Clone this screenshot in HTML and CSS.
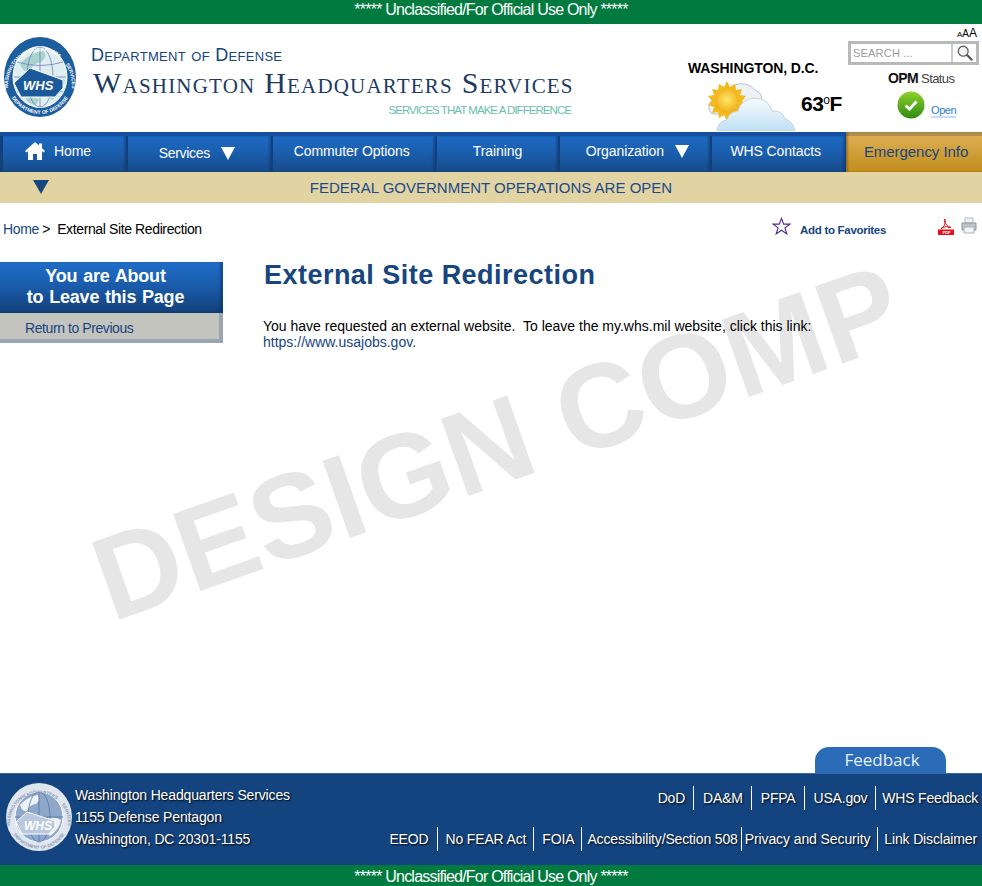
FILE: index.html
```html
<!DOCTYPE html>
<html lang="en">
<head>
  <meta charset="UTF-8" />
  <meta name="viewport" content="width=device-width, initial-scale=1.0" />
  <title>External Site Redirection</title>
  <link rel="stylesheet" href="styles.css">
</head>
<body>
  <div class="classified">***** Unclassified/For Official Use Only *****</div>

  <header class="site-header">
    <svg class="seal" viewBox="0 0 74 82" aria-hidden="true">
      <defs>
        <path id="sealTop" d="M5.500 56A32 35 0 1 1 68.500 56"/>
        <path id="sealBottom" d="M9 62A34 37 0 0 0 65 62"/>
      </defs>
      <ellipse cx="37" cy="41" rx="36" ry="40" fill="#1d5e9e"/>
      <ellipse cx="37" cy="41" rx="27" ry="30.500" fill="#dfeef0" stroke="#fff"/>
      <path d="M17 28q10-12 24-13q4 6-3 11q-8 1-11 9q-7 2-10-7zM45 43q10-3 17 1q-2 13-13 20q-8-8-4-21zM22 62q8-2 14 1q-1 5-5 6q-6-2-9-7z" fill="#a9d3cf"/>
      <g fill="none" stroke="#6f7fc0" stroke-width=".8">
        <ellipse cx="37" cy="41" rx="13" ry="30"/>
        <path d="M37 11v60M11 41h52M14 26q23 7 46 0M14 56q23-7 46 0"/>
      </g>
      <path d="M11 47L27 32l33 12v8l-8 9H18z" fill="#1b5a9a" stroke="#fff"/>
      <text class="seal-whs" x="20" y="54">WHS</text>
      <text class="seal-ring"><textPath href="#sealTop" startOffset="3%">WASHINGTON</textPath></text>
      <text class="seal-ring"><textPath href="#sealTop" startOffset="50%" text-anchor="middle">HEADQUARTERS</textPath></text>
      <text class="seal-ring"><textPath href="#sealTop" startOffset="97%" text-anchor="end">SERVICES</textPath></text>
      <text class="seal-ring"><textPath href="#sealBottom" startOffset="50%" text-anchor="middle">DEPARTMENT OF DEFENSE</textPath></text>
    </svg>

    <div class="brand">
      <div class="brand-dept">Department of Defense</div>
      <div class="brand-name">Washington Headquarters Services</div>
      <div class="brand-tag">SERVICES THAT MAKE A DIFFERENCE</div>
    </div>

    <div class="weather">
      <div class="weather-city">WASHINGTON, D.C.</div>
      <div class="weather-now">
        <svg class="weather-icon" viewBox="0 0 90 50" aria-hidden="true">
          <defs>
            <radialGradient id="sunFill" cx=".5" cy=".45" r=".55">
              <stop offset="0" stop-color="#ffe66b"/>
              <stop offset="1" stop-color="#f0ae12"/>
            </radialGradient>
            <linearGradient id="cloudFill" x1="0" y1="0" x2="0" y2="1">
              <stop offset="0" stop-color="#f8fcfe"/>
              <stop offset="1" stop-color="#bfe0f5"/>
            </linearGradient>
          </defs>
          <path d="M28 4q13-4 21 5q9 3 6 14q-6 10-20 10H6q-6-6-1-13z" fill="#eef2f6" stroke="#b8c0c8"/>
          <path d="M21 0l3 6 5-3 1 6 6-1-2 6 6 1-4 5 4 4-6 2 2 6-6-1-1 6-5-3-3 6-3-6-5 3-1-6-6 1 2-6-6-2 4-4-4-5 6-1-2-6 6 1 1-6 5 3z" fill="#f3b91f"/>
          <circle cx="21" cy="20" r="12" fill="url(#sunFill)"/>
          <path d="M11 50q1-10 10-11q2-8 11-9q3-12 17-13q14 1 17 13q10-1 13 8q8 2 10 12z" fill="url(#cloudFill)" stroke="#c4d2dc"/>
        </svg>
        <div class="weather-temp">63<sup>o</sup>F</div>
      </div>
    </div>

    <div class="header-right">
      <div class="text-size"><span class="size-s">A</span><span class="size-m">A</span><span class="size-l">A</span></div>
      <div class="search">
        <input class="search-input" type="text" placeholder="SEARCH ..." />
        <div class="search-btn">
          <svg viewBox="0 0 20 20" width="18" height="18" aria-hidden="true">
            <circle cx="8" cy="8" r="5.500" fill="#f4f4f4" stroke="#666" stroke-width="1.500"/>
            <path d="M12 12l6 6" stroke="#555" stroke-width="2.500"/>
          </svg>
        </div>
      </div>
      <div class="opm-title"><b>OPM</b> Status</div>
      <div class="opm-state">
        <svg viewBox="0 0 28 28" width="28" height="28" aria-hidden="true">
          <defs>
            <linearGradient id="okFill" x1="0" y1="0" x2="0" y2="1">
              <stop offset="0" stop-color="#8ed12a"/>
              <stop offset="1" stop-color="#2f8a12"/>
            </linearGradient>
          </defs>
          <circle cx="14" cy="14" r="13.500" fill="url(#okFill)"/>
          <path d="M8.500 14.500l4 3.500 7-7.500" fill="none" stroke="#fff" stroke-width="2.800"/>
        </svg>
        <a class="opm-link" href="#">Open</a>
      </div>
    </div>
  </header>

  <nav class="main-nav">
    <a class="nav-item nav-home" href="#">
      <svg viewBox="0 0 20 18" width="20" height="18" aria-hidden="true">
        <path d="M10 0L0 9l1.500 1.500L3 9.300V18h5v-6h4v6h5V9.300l1.500 1.200L20 9l-3-2.700V1.500h-3v2z" fill="#fff"/>
      </svg>
      <span>Home</span>
    </a>
    <a class="nav-item nav-services" href="#">Services<span class="nav-arrow"></span></a>
    <a class="nav-item nav-commuter" href="#">Commuter Options</a>
    <a class="nav-item nav-training" href="#">Training</a>
    <a class="nav-item nav-org" href="#">Organization<span class="nav-arrow"></span></a>
    <a class="nav-item nav-contacts" href="#">WHS Contacts</a>
    <a class="nav-item nav-emergency" href="#">Emergency Info</a>
  </nav>

  <div class="alert">
    <div class="alert-toggle"><span class="alert-arrow"></span></div>
    <div class="alert-text">FEDERAL GOVERNMENT OPERATIONS ARE OPEN</div>
  </div>

  <main class="page">
    <div class="watermark">DESIGN COMP</div>

    <div class="crumb-row">
      <div class="crumbs"><a href="#">Home</a> &gt;&nbsp; External Site Redirection</div>
      <a class="favorites" href="#">
        <svg viewBox="0 0 20 19" width="19" height="18" aria-hidden="true">
          <path d="M10 1.500l2.300 6h6.500l-5.200 4 2 6.300L10 14l-5.600 3.800 2-6.300-5.200-4h6.500z" fill="#fff" stroke="#4b2a96" stroke-width="1.200"/>
        </svg>
        <span>Add to Favorites</span>
      </a>
      <svg class="tool-pdf" viewBox="0 0 16 18" width="16" height="18" aria-hidden="true">
        <path d="M0 0h16v18H0z" fill="#fff" stroke="#ddd" stroke-width=".6"/>
        <path d="M3 11.500q2.500-.5 4-4.500q.8-2.500 0-5q-1.500 1 0 4q1.500 3 6 4.500q-1.500 1-4.500-1q-3 .5-5.500 2z" fill="none" stroke="#d8141c" stroke-width="1"/>
        <path d="M0 12.500h16V18H0z" fill="#e0121a"/>
        <text class="pdf-label" x="4.500" y="17">PDF</text>
      </svg>
      <svg class="tool-print" viewBox="0 0 16 17" width="16" height="17" aria-hidden="true">
        <path d="M4 1h8v5H4z" fill="#eef1f4" stroke="#b4bbc3"/>
        <path d="M1 6h14v7H1z" fill="#bcc2c9" stroke="#8f98a0"/>
        <path d="M3 10h10v6H3z" fill="#f4f5f6" stroke="#a9b0b8"/>
      </svg>
    </div>

    <div class="content">
      <aside class="side">
        <div class="side-head">You are About<br>to Leave this Page</div>
        <a class="side-link" href="#">Return to Previous</a>
      </aside>
      <article class="article">
        <h1>External Site Redirection</h1>
        <p>You have requested an external website.&nbsp; To leave the my.whs.mil website, click this link:<br><a href="#">https://www.usajobs.gov.</a></p>
      </article>
    </div>

    <div class="feedback-row">
      <a class="feedback" href="#">Feedback</a>
    </div>
  </main>

  <footer class="site-footer">
    <svg class="footer-seal" viewBox="0 0 66 68" aria-hidden="true">
      <defs>
        <path id="footTop" d="M4.500 46A29 30 0 1 1 61.500 46"/>
        <path id="footBottom" d="M8 52A30 31 0 0 0 58 52"/>
      </defs>
      <ellipse cx="33" cy="34" rx="33" ry="34" fill="#dfe6ef"/>
      <ellipse cx="33" cy="34" rx="24" ry="25" fill="#8fa8c9" stroke="#fff"/>
      <path d="M14 22q8-9 18-10q3 5-2 9q-7 1-9 7q-5 1-7-6zM40 36q9-3 15 1q-2 10-11 16q-7-6-4-17z" fill="#eef2f7"/>
      <g fill="none" stroke="#4f76a8" stroke-width=".8">
        <ellipse cx="33" cy="34" rx="11" ry="25"/>
        <path d="M33 9v50M9 34h48"/>
      </g>
      <path d="M10 39l11-10 28 9v6l-6 7H16z" fill="#b9c8dc" stroke="#fff"/>
      <text class="seal-whs seal-whs-foot" x="18" y="47">WHS</text>
      <text class="seal-ring seal-ring-foot"><textPath href="#footTop" startOffset="3%">WASHINGTON</textPath></text>
      <text class="seal-ring seal-ring-foot"><textPath href="#footTop" startOffset="50%" text-anchor="middle">HEADQUARTERS</textPath></text>
      <text class="seal-ring seal-ring-foot"><textPath href="#footTop" startOffset="97%" text-anchor="end">SERVICES</textPath></text>
      <text class="seal-ring seal-ring-foot"><textPath href="#footBottom" startOffset="50%" text-anchor="middle">DEPARTMENT OF DEFENSE</textPath></text>
    </svg>
    <address class="footer-addr">
      Washington Headquarters Services<br>
      1155 Defense Pentagon<br>
      Washington, DC 20301-1155
    </address>
    <div class="footer-links">
      <ul class="link-row row-a">
        <li><a href="#">DoD</a></li>
        <li><a href="#">DA&amp;M</a></li>
        <li><a href="#">PFPA</a></li>
        <li><a href="#">USA.gov</a></li>
        <li><a href="#">WHS Feedback</a></li>
      </ul>
      <ul class="link-row row-b">
        <li class="link-eeod"><a href="#">EEOD</a></li>
        <li><a href="#">No FEAR Act</a></li>
        <li class="link-foia"><a href="#">FOIA</a></li>
        <li class="link-access"><a href="#">Accessibility/Section 508</a></li>
        <li class="link-privacy"><a href="#">Privacy and Security</a></li>
        <li><a href="#">Link Disclaimer</a></li>
      </ul>
    </div>
  </footer>

  <div class="classified classified-bottom">***** Unclassified/For Official Use Only *****</div>
</body>
</html>
```

FILE: styles.css
```css
* {
  box-sizing: border-box;
}
body {
  margin: 0;
  height: 886px;
  display: flex;
  flex-direction: column;
  background: #fff;
  font-family: "Liberation Sans", Arial, sans-serif;
  font-size: 14px;
  color: #000;
  overflow: hidden;
}
a {
  text-decoration: none;
  color: #16457f;
}

/* classification bars */
.classified {
  height: 24px;
  flex: none;
  background: #007a3e;
  color: #fff;
  font-size: 16px;
  line-height: 20px;
  letter-spacing: -0.78px;
  text-align: center;
}
.classified-bottom {
  height: 21px;
  line-height: 24px;
  overflow: hidden;
}

/* header */
.site-header {
  height: 108px;
  flex: none;
  display: flex;
}
.seal {
  width: 74px;
  height: 82px;
  margin: 12px 0 0 3px;
  flex: none;
}
.seal-whs {
  font: italic bold 13px "Liberation Sans", sans-serif;
  fill: #fff;
}
.seal-whs-foot {
  font-size: 12px;
  fill: #fff;
}
.seal-ring {
  font: bold 5px "Liberation Sans", sans-serif;
  fill: #fff;
}
.seal-ring-foot {
  font-size: 4.500px;
  fill: #8a9cb5;
}
.brand {
  width: 480px;
  margin-left: 14px;
  padding-top: 20px;
  flex: none;
  color: #16457f;
}
.brand-dept {
  font-size: 18px;
  line-height: 22px;
  font-variant: small-caps;
  letter-spacing: 0.3px;
}
.brand-name {
  margin: 0 0 0 2px;
  font-family: "Liberation Serif", serif;
  font-size: 30px;
  line-height: 34px;
  font-variant: small-caps;
  letter-spacing: 1.2px;
  color: #1d3a66;
  white-space: nowrap;
}
.brand-tag {
  margin-top: 3px;
  font-size: 11.500px;
  line-height: 14px;
  letter-spacing: -0.95px;
  text-align: right;
  color: #6cc0ae;
}
.weather {
  width: 160px;
  margin-left: 117px;
  padding-top: 36px;
  flex: none;
}
.weather-city {
  font-size: 14px;
  font-weight: bold;
  line-height: 16px;
  letter-spacing: -0.1px;
}
.weather-now {
  display: flex;
  margin-top: 5px;
}
.weather-icon {
  width: 90px;
  height: 50px;
  margin-left: 18px;
  flex: none;
}
.weather-temp {
  margin: 11px 0 0 5px;
  font-size: 21px;
  font-weight: bold;
  line-height: 24px;
  letter-spacing: -0.5px;
}
.weather-temp sup {
  font-size: 12px;
  font-weight: normal;
  line-height: 0;
  vertical-align: 7px;
}
.header-right {
  width: 134px;
  flex: none;
}
.text-size {
  height: 17px;
  padding: 1px 5px 0 0;
  text-align: right;
  line-height: 15px;
}
.size-s {
  font-size: 8px;
}
.size-m {
  font-size: 10px;
}
.size-l {
  font-size: 12px;
}
.search {
  width: 131px;
  height: 24px;
  display: flex;
  border: 3px solid #b9b9b9;
  background: #fff;
}
.search-input {
  flex: 1;
  min-width: 0;
  border: 0;
  border-right: 2px solid #ccc;
  padding: 0 2px;
  font: 11px "Liberation Sans", sans-serif;
  letter-spacing: 0.2px;
  outline: none;
}
.search-input::placeholder {
  color: #9a9a9a;
  opacity: 1;
}
.search-btn {
  width: 23px;
  padding: 0 0 0 3px;
}
.opm-title {
  margin-top: 4px;
  padding-left: 40px;
  font-size: 13px;
  line-height: 18px;
  letter-spacing: -0.6px;
  color: #444;
  white-space: nowrap;
}
.opm-title b {
  font-size: 14px;
  color: #111;
}
.opm-state {
  display: flex;
  margin: 3px 0 0 49px;
}
.opm-link {
  margin: 13px 0 0 6px;
  height: 14px;
  font-size: 11px;
  line-height: 13px;
  letter-spacing: -0.4px;
  color: #2b7de0;
  border-bottom: 2px solid #c3dcf6;
}

/* main nav */
.main-nav {
  height: 40px;
  flex: none;
  display: flex;
  padding: 4px 0 0 3px;
  background: linear-gradient(#154f9d 0 4px, #14407a 4px);
  gap: 2px;
}
.nav-item {
  display: flex;
  align-items: center;
  justify-content: center;
  padding-bottom: 6px;
  background: linear-gradient(#1e69c4, #1a5fae 45%, #174a8a);
  box-shadow: inset -2px 0 2px rgba(10, 40, 90, 0.35);
  color: #fff;
  font-size: 14px;
  letter-spacing: -0.1px;
  white-space: nowrap;
}
.nav-home {
  width: 123px;
  gap: 9px;
  padding-left: 22px;
  justify-content: flex-start;
}
.nav-services {
  width: 143px;
  padding: 0 5px 2px 0;
  letter-spacing: -0.3px;
}
.nav-commuter {
  width: 162px;
  padding-right: 4px;
}
.nav-training {
  width: 122px;
}
.nav-org {
  width: 150px;
  padding-left: 4px;
}
.nav-contacts {
  width: 133px;
  padding-right: 6px;
}
.nav-emergency {
  width: 136px;
  margin: -4px 0 0 -1px;
  padding: 0 0 2px 4px;
  background: linear-gradient(#ae8e4a 0 4px, #dcae52 4px, #c28d1b);
  box-shadow: inset 2px 0 2px rgba(90, 60, 10, 0.4);
  color: #16457f;
  font-size: 15px;
  letter-spacing: -0.05px;
}
.nav-arrow {
  width: 0;
  height: 0;
  margin-left: 11px;
  border-left: 7px solid transparent;
  border-right: 7px solid transparent;
  border-top: 13px solid #fff;
}

/* status strip */
.alert {
  height: 31px;
  flex: none;
  display: grid;
  grid-template-columns: 1fr auto 1fr;
  align-items: center;
  background: #e2d3a2;
}
.alert-toggle {
  padding: 0 0 2px 33px;
  line-height: 0;
}
.alert-arrow {
  display: inline-block;
  width: 0;
  height: 0;
  border-left: 8px solid transparent;
  border-right: 8px solid transparent;
  border-top: 14px solid #17477f;
}
.alert-text {
  font-size: 15px;
  color: #1a4a8a;
}

/* page body */
.page {
  flex: 1;
  position: relative;
  display: flex;
  flex-direction: column;
  overflow: hidden;
}
.watermark {
  position: absolute;
  left: 50%;
  top: 239px;
  margin-left: 6px;
  z-index: -1;
  transform: translate(-50%, -50%) rotate(-19.5deg);
  font-size: 119px;
  font-weight: bold;
  color: #e6e6e6;
  white-space: nowrap;
}
.crumb-row {
  height: 59px;
  flex: none;
  display: flex;
  padding: 14px 5px 0 3px;
}
.crumbs {
  flex: 1;
  line-height: 24px;
  letter-spacing: -0.38px;
}
.favorites {
  display: flex;
  gap: 9px;
  margin-right: 52px;
  font-size: 11.500px;
  font-weight: bold;
  line-height: 26px;
  height: 24px;
  letter-spacing: -0.3px;
}
.tool-pdf {
  margin-right: 7px;
}
.pdf-label {
  font: bold 4px "Liberation Sans", sans-serif;
  fill: #fff;
}
.content {
  flex: 1;
  display: flex;
}
.side {
  width: 223px;
  flex: none;
}
.side-head {
  height: 51px;
  padding: 4px 12px 0 0;
  background: linear-gradient(#1f6ec9, #1a5aa8 50%, #123f78);
  box-shadow: inset -3px 0 2px rgba(10, 40, 90, 0.4);
  color: #fff;
  font-size: 18px;
  font-weight: bold;
  line-height: 21px;
  text-align: center;
  word-spacing: 1px;
  letter-spacing: -0.2px;
}
.side-link {
  display: block;
  height: 30px;
  padding-left: 25px;
  background: #c4c4bf;
  border-right: 4px solid #9aa5b3;
  border-bottom: 4px solid #9aa5b3;
  font-size: 14px;
  line-height: 30px;
  letter-spacing: -0.42px;
}
.article {
  padding-left: 40px;
}
.article h1 {
  margin: 0 0 0 1px;
  font-size: 27px;
  line-height: 26px;
  letter-spacing: 0.47px;
  color: #16457f;
}
.article p {
  margin: 30px 0 0;
  line-height: 16px;
}
.feedback-row {
  display: flex;
  justify-content: flex-end;
  padding-right: 36px;
}
.feedback {
  width: 131px;
  height: 26px;
  padding-left: 3px;
  border-radius: 14px 14px 0 0;
  background: #2a6cb8;
  color: #e8eef7;
  font-family: "Open Sans", sans-serif;
  font-size: 17px;
  line-height: 26px;
  text-align: center;
}

/* footer */
.site-footer {
  height: 92px;
  flex: none;
  display: flex;
  border-top: 1px solid #3468a5;
  background: #14447f;
  color: #fff;
}
.footer-seal {
  width: 66px;
  height: 68px;
  margin: 9px 3px 0 6px;
  flex: none;
}
.footer-addr {
  padding-top: 10px;
  font-style: normal;
  line-height: 22px;
  letter-spacing: -0.15px;
  text-shadow: 1px 1px 2px #000;
}
.footer-links {
  flex: 1;
  padding: 12px 4px 0 0;
}
.link-row {
  display: flex;
  justify-content: flex-end;
  height: 24px;
  margin: 0 0 17px;
  padding: 0;
  list-style: none;
}
.link-row li {
  border-left: 1px solid #fff;
  line-height: 24px;
  letter-spacing: -0.2px;
}
.row-a li {
  padding: 0 8px 0 9px;
}
.row-b {
  margin-right: 1px;
}
.row-b li {
  padding: 0 7px;
  letter-spacing: -0.15px;
}
.link-row li:first-child {
  border-left: 0;
}
.link-row li:last-child {
  padding: 0 0 0 6px;
}
.row-b .link-eeod {
  padding-right: 9px;
}
.row-b .link-foia {
  padding: 0 7px 0 8px;
}
.row-b .link-access {
  padding: 0 3px 0 5px;
}
.row-b .link-privacy {
  padding: 0 7px 0 3px;
  letter-spacing: -0.1px;
}
.link-row a {
  color: #fff;
  text-shadow: 1px 1px 2px #000;
}
```
